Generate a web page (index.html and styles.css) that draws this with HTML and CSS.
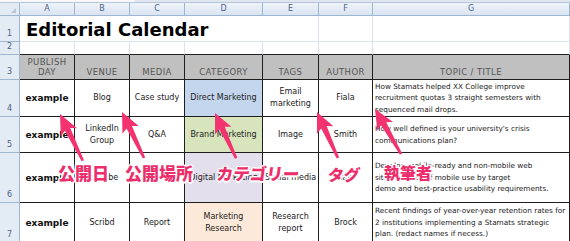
FILE: index.html
```html
<!DOCTYPE html>
<html lang="ja">
<head>
<meta charset="utf-8">
<title>Editorial Calendar</title>
<link rel="stylesheet" href="styles.css">
</head>
<body>
<div class="page">
  <div class="strip"><span class="strip-box"></span></div>
  <div class="sheet">
    <!-- column headers -->
    <div class="corner"><span class="tri"></span></div>
    <div class="colh">A</div><div class="colh">B</div><div class="colh">C</div><div class="colh">D</div><div class="colh">E</div><div class="colh">F</div><div class="colh">G</div>

    <!-- row 1 -->
    <div class="rowh">1</div>
    <div class="title span4">Editorial Calendar</div>
    <div class="blank"></div><div class="blank"></div><div class="blank"></div>

    <!-- row 2 -->
    <div class="rowh">2</div>
    <div class="blank dark-bottom"></div><div class="blank dark-bottom"></div><div class="blank dark-bottom"></div><div class="blank dark-bottom"></div><div class="blank dark-bottom"></div><div class="blank dark-bottom"></div><div class="blank dark-bottom"></div>

    <!-- row 3 -->
    <div class="rowh">3</div>
    <div class="hd">PUBLISH<br>DAY</div>
    <div class="hd">VENUE</div>
    <div class="hd">MEDIA</div>
    <div class="hd">CATEGORY</div>
    <div class="hd">TAGS</div>
    <div class="hd">AUTHOR</div>
    <div class="hd">TOPIC / TITLE</div>

    <!-- row 4 -->
    <div class="rowh">4</div>
    <div class="cell ex">example</div>
    <div class="cell">Blog</div>
    <div class="cell">Case study</div>
    <div class="cell cat-blue">Direct Marketing</div>
    <div class="cell">Email<br>marketing</div>
    <div class="cell">Fiala</div>
    <div class="cell topic">How Stamats helped XX College improve<br>recruitment quotas 3 straight semesters with<br>sequenced mail drops.</div>

    <!-- row 5 -->
    <div class="rowh">5</div>
    <div class="cell ex">example</div>
    <div class="cell">LinkedIn<br>Group</div>
    <div class="cell">Q&amp;A</div>
    <div class="cell cat-green">Brand Marketing</div>
    <div class="cell">Image</div>
    <div class="cell">Smith</div>
    <div class="cell topic">How well defined is your university's crisis<br>communications plan?</div>

    <!-- row 6 -->
    <div class="rowh">6</div>
    <div class="cell ex">example</div>
    <div class="cell">YouTube</div>
    <div class="cell">Video</div>
    <div class="cell cat-purple">Digital Marketing</div>
    <div class="cell">Social media</div>
    <div class="cell">Fiala</div>
    <div class="cell topic">Develop mobile-ready and non-mobile web<br>site statistics of mobile use by target<br>demo and best-practice usability requirements.</div>

    <!-- row 7 -->
    <div class="rowh">7</div>
    <div class="cell ex">example</div>
    <div class="cell">Scribd</div>
    <div class="cell">Report</div>
    <div class="cell cat-peach">Marketing<br>Research</div>
    <div class="cell">Research<br>report</div>
    <div class="cell">Brock</div>
    <div class="cell topic">Recent findings of year-over-year retention rates for<br>2 institutions implementing a Stamats strategic<br>plan. (redact names if necess.)</div>
  </div>

  <svg class="arrows" width="570" height="241" viewBox="0 0 570 241" aria-hidden="true">
    <defs>
      <path id="arr" d="M0 0 L9 19.5 L3 16.5 L1.3 50 L-1.3 50 L-3 16.5 L-9 19.5 Z"/>
    </defs>
    <use href="#arr" transform="translate(60 114) rotate(-26) scale(1 1.04)"/>
    <use href="#arr" transform="translate(122 112) rotate(-25.6) scale(1 1.02)"/>
    <use href="#arr" transform="translate(215 113) rotate(-25) scale(1 1)"/>
    <use href="#arr" transform="translate(317 112) rotate(-24.5) scale(1 1.01)"/>
    <use href="#arr" transform="translate(375 109) rotate(-30) scale(1 1.04)"/>
  </svg>

  <span class="label l1">公開日</span>
  <span class="label l2">公開場所</span>
  <span class="label l3 slant">カテゴリー</span>
  <span class="label l4 slant">タグ</span>
  <span class="label l5">執筆者</span>
</div>
</body>
</html>
```

FILE: styles.css
```css
* { box-sizing: border-box; }

html, body {
  margin: 0;
  padding: 0;
  background: #ffffff;
}

body {
  font-family: "DejaVu Sans", "Liberation Sans", sans-serif;
  width: 570px;
  height: 241px;
  overflow: hidden;
}

.page {
  position: relative;
  width: 570px;
  height: 241px;
  overflow: hidden;
}

.strip {
  height: 3px;
  background: #dfe6ef;
  border-bottom: 1px solid #b7c6d8;
  display: flex;
}

.strip-box {
  width: 135px;
  height: 2px;
  background: #f7f9fc;
}

.sheet {
  display: grid;
  grid-template-columns: 20px 55px 55px 55px 78px 56px 54px 197px;
  grid-template-rows: 13px 26px 13px 25px 37px 36px 50px 40px;
}

.corner {
  background: #e3ebf5;
  border-right: 1px solid #9eb6ce;
  border-bottom: 1px solid #9eb6ce;
  position: relative;
}

.tri {
  position: absolute;
  right: 3px;
  bottom: 2px;
  width: 0;
  height: 0;
  border-left: 5px solid transparent;
  border-bottom: 5px solid #b9c6d6;
}

.colh {
  background: linear-gradient(#eef3fa, #d9e4f2);
  border-right: 1px solid #9eb6ce;
  border-bottom: 1px solid #9eb6ce;
  color: #4e6285;
  font-size: 8px;
  line-height: 12px;
  text-align: center;
}

.rowh {
  background: #e3ebf5;
  border-right: 1px solid #9eb6ce;
  border-bottom: 1px solid #9eb6ce;
  color: #4e6285;
  font-size: 8px;
  line-height: 10px;
  display: flex;
  align-items: flex-end;
  justify-content: center;
  padding-bottom: 2px;
}

.blank {
  border-right: 1px solid #dde3ec;
  border-bottom: 1px solid #dde3ec;
}

.dark-bottom {
  border-bottom: 1px solid #1e1e1e;
}

.title {
  grid-column: span 4;
  border-bottom: 1px solid #dde3ec;
  font-weight: bold;
  font-size: 18px;
  line-height: 24px;
  padding-top: 2px;
  padding-left: 6px;
  color: #000;
  white-space: nowrap;
}

.hd {
  background: #c0c0c0;
  border-right: 1px solid #1e1e1e;
  border-bottom: 1px solid #1e1e1e;
  color: #555;
  font-size: 8.5px;
  letter-spacing: 0.4px;
  line-height: 10px;
  text-align: center;
  display: flex;
  align-items: flex-end;
  justify-content: center;
  padding-bottom: 2px;
  white-space: nowrap;
}

.cell {
  border-right: 1px solid #1e1e1e;
  border-bottom: 1px solid #1e1e1e;
  font-size: 8px;
  line-height: 12px;
  color: #222;
  text-align: center;
  display: flex;
  align-items: center;
  justify-content: center;
  white-space: nowrap;
  overflow: hidden;
}

.ex {
  font-weight: bold;
  font-size: 9px;
  color: #111;
}

.topic {
  justify-content: flex-start;
  text-align: left;
  font-size: 7.3px;
  line-height: 11.5px;
  padding-left: 2px;
  color: #222;
}

.cat-blue { background: #c3d6ee; }
.cat-green { background: #d8e4bc; }
.cat-purple { background: #e4dfec; }
.cat-peach { background: #fde9d9; }

.arrows {
  position: absolute;
  left: 0;
  top: 0;
  fill: #f2336f;
  pointer-events: none;
}

.label {
  position: absolute;
  font-family: "Noto Sans CJK JP", "Noto Sans", sans-serif;
  font-weight: 900;
  line-height: 1;
  color: #ec2f6c;
  white-space: nowrap;
  text-shadow:
    1.5px 0 0 #fff, -1.5px 0 0 #fff, 0 1.5px 0 #fff, 0 -1.5px 0 #fff,
    1.2px 1.2px 0 #fff, -1.2px 1.2px 0 #fff, 1.2px -1.2px 0 #fff, -1.2px -1.2px 0 #fff;
}

.slant { transform: skewX(-8deg); }

.l1 { left: 58px; top: 164px; font-size: 17px; }
.l2 { left: 125px; top: 164px; font-size: 17px; }
.l3 { left: 217px; top: 165px; font-size: 16.5px; }
.l4 { left: 328px; top: 166px; font-size: 16px; }
.l5 { left: 384px; top: 164px; font-size: 16px; }
```
